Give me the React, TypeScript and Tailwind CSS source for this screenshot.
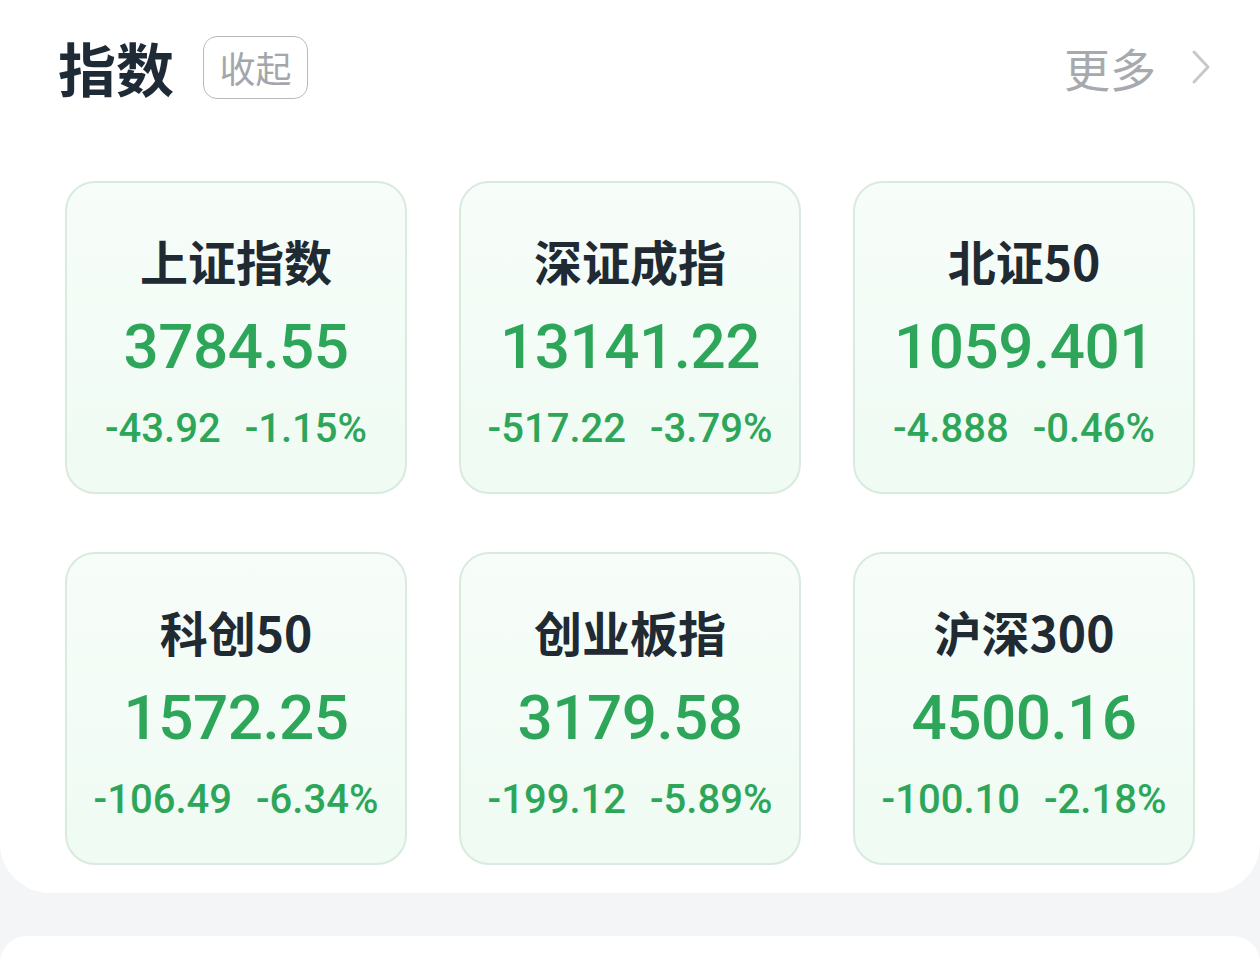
import React from "react";

type Index = { name: string; value: string; change: string; pct: string };

const indices: Index[] = [
  { name: "上证指数", value: "3784.55", change: "-43.92", pct: "-1.15%" },
  { name: "深证成指", value: "13141.22", change: "-517.22", pct: "-3.79%" },
  { name: "北证50", value: "1059.401", change: "-4.888", pct: "-0.46%" },
  { name: "科创50", value: "1572.25", change: "-106.49", pct: "-6.34%" },
  { name: "创业板指", value: "3179.58", change: "-199.12", pct: "-5.89%" },
  { name: "沪深300", value: "4500.16", change: "-100.10", pct: "-2.18%" },
];

const cjk = "font-['Noto_Sans_CJK_SC','Noto_Sans',sans-serif]";
const num = "font-['Roboto','Noto_Sans',sans-serif]";

function IndexCard({ item }: { item: Index }) {
  return (
    <div className="h-[313px] rounded-[30px] border-2 border-[#d9eadf] bg-gradient-to-b from-[#f7fdf9] to-[#effbf3] flex flex-col items-center pt-[49px]">
      <div className={`${cjk} h-[56px] leading-[56px] text-[48px] font-bold text-[#1f2a33]`}>
        {item.name}
      </div>
      <div className={`${num} mt-[23px] h-[72px] leading-[72px] text-[62px] font-medium tracking-[-0.5px] text-[#2ea65a]`}>
        {item.value}
      </div>
      <div className={`${num} mt-[24px] h-[44px] leading-[44px] text-[40px] font-medium text-[#2ea65a] flex gap-[24px]`}>
        <span>{item.change}</span>
        <span>{item.pct}</span>
      </div>
    </div>
  );
}

export default function App() {
  return (
    <div className="min-h-[963px] bg-[#f4f5f7] flex flex-col">
      <div className="bg-white rounded-b-[50px] pb-[28px]">
        <div className="h-[134px] flex items-center pl-[58px] pr-[48px]">
          <h2 className={`${cjk} text-[58px] font-bold text-[#1e2a35] leading-none`}>指数</h2>
          <button
            className={`${cjk} ml-[29px] h-[63px] w-[105px] rounded-[14px] border-[1.5px] border-[#b7babd] text-[36px] text-[#a3a7ab] leading-none flex items-center justify-center`}
          >
            收起
          </button>
          <div className="flex-1" />
          <span className={`${cjk} text-[46px] text-[#a6aaae] leading-none`}>更多</span>
          <svg width="22" height="36" viewBox="0 0 22 36" className="ml-[34px]" fill="none">
            <path d="M4 3 L18 18 L4 33" stroke="#c6c9cc" strokeWidth="3" strokeLinecap="round" strokeLinejoin="round" />
          </svg>
        </div>
        <div className="mt-[47px] px-[65px] grid grid-cols-3 gap-x-[52px] gap-y-[58px]">
          {indices.map((it) => (
            <IndexCard key={it.name} item={it} />
          ))}
        </div>
      </div>
      <div className="mt-[43px] flex-1 bg-white rounded-t-[50px]" />
    </div>
  );
}
